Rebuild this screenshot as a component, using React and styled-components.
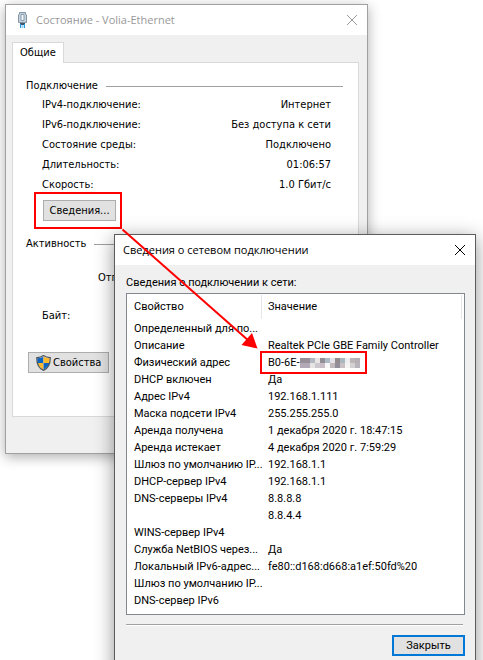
import React from "react";
import styled, { createGlobalStyle } from "styled-components";

const Global = createGlobalStyle`
  * { box-sizing: border-box; }
  body { margin: 0; background: #fff; color: #000; }
`;

const dialogFont = '"DejaVu Sans Condensed", "DejaVu Sans", Tahoma, sans-serif';
const listFont = 'Roboto, "Liberation Sans", sans-serif';

const Desktop = styled.main`
  position: relative;
  min-height: 100vh;
  overflow: hidden;
  font: 11px/16px ${dialogFont};
`;

const Window = styled.section`
  position: absolute;
  top: ${(p) => p.$top}px;
  left: ${(p) => p.$left}px;
  right: ${(p) => p.$right}px;
  background: #f0f0f0;
  border: 1px solid ${(p) => (p.$active ? "#5c5c5c" : "#a0a0a0")};
  box-shadow: ${(p) =>
    p.$active ? "0 4px 18px rgba(0, 0, 0, 0.42)" : "0 3px 12px rgba(0, 0, 0, 0.32)"};
`;

const TitleBar = styled.header`
  display: flex;
  align-items: center;
  gap: 9px;
  height: 30px;
  padding: 0 9px 0 ${(p) => (p.$active ? 8 : 12)}px;
  background: #fff;
  color: ${(p) => (p.$active ? "#000" : "#999")};
`;

const Title = styled.h1`
  flex: 1;
  margin: 0;
  font: 400 11px/16px "Open Sans", "Noto Sans", sans-serif;
  white-space: nowrap;
`;

const CloseButton = styled.button`
  display: flex;
  padding: 0;
  border: 0;
  background: none;
  color: inherit;
`;

const TabStrip = styled.div`
  display: flex;
  padding: 7px 6px 0;
`;

const Tab = styled.button`
  position: relative;
  z-index: 1;
  height: 21px;
  margin-bottom: -1px;
  padding: 0 7px;
  border: 1px solid #d9d9d9;
  border-bottom: 0;
  background: #fff;
  color: #000;
  font: 11px/16px ${dialogFont};
`;

const TabPanel = styled.div`
  margin: 0 8px 36px 6px;
  padding: 15px 15px 43px 13px;
  border: 1px solid #d9d9d9;
  background: #fff;
`;

const GroupTitle = styled.h2`
  display: flex;
  align-items: center;
  gap: 8px;
  margin: 0;
  font: 400 11px/16px ${dialogFont};
  &::after {
    content: "";
    flex: 1;
    height: 1px;
    background: #a0a0a0;
  }
`;

const StatusList = styled.dl`
  margin: 1px 12px 0 16px;
`;

const StatusRow = styled.div`
  display: flex;
  justify-content: space-between;
  line-height: 20px;
  dd { margin: 0; }
`;

const PushButton = styled.button`
  display: inline-flex;
  align-items: center;
  justify-content: center;
  gap: 2px;
  min-width: 73px;
  height: 21px;
  padding: 0 ${(p) => (p.$shield ? 7 : 4)}px;
  border: ${(p) => (p.$primary ? "2px solid #0078d7" : "1px solid #adadad")};
  background: #e1e1e1;
  color: #000;
  font: 11px/16px ${(p) => (p.$primary ? listFont : dialogFont)};
`;

const Highlight = styled.div`
  width: fit-content;
  margin: -3px 0 7px 8px;
  padding: 6px 4px 6px 7px;
  border: 2px solid #f00;
  display: flex;
`;

const Activity = styled.div`
  display: grid;
  gap: 22px;
  padding: 18px 12px 28px 16px;
`;

const SentLabel = styled.span`
  padding-left: 56px;
`;

const Footer = styled.div`
  padding-left: 2px;
  display: flex;
`;

const DetailsBody = styled.div`
  padding: 10px 10px 24px 11px;
  font-family: ${listFont};
`;

const Caption = styled.p`
  margin: 0 0 2px;
`;

const ListFrame = styled.div`
  padding: 0 2px 5px 0;
  border: 1px solid #828790;
  background: #fff;
`;

const DetailsTable = styled.table`
  width: 100%;
  border-collapse: separate;
  border-spacing: 0;
  table-layout: fixed;
  white-space: nowrap;
  th, td {
    padding: 0 0 0 6px;
    font-weight: 400;
    text-align: left;
  }
  th:first-child, td:first-child { padding-left: 7px; }
  thead th {
    height: 26px;
    background: linear-gradient(#e5e5e5, #e5e5e5) right 0 top 1px / 1px 24px no-repeat;
  }
  td {
    height: 17px;
    line-height: 17px;
  }
`;

const NameColumn = styled.col`
  width: 135px;
`;

const Address = styled.span`
  position: relative;
  display: inline-flex;
  align-items: center;
  &::after {
    content: "";
    position: absolute;
    inset: -3px -7px -3px -8px;
    border: 2px solid #f00;
  }
`;

const Divider = styled.hr`
  height: 2px;
  margin: 9px 2px 9px 0;
  border: 0;
  border-top: 1px solid #a0a0a0;
  background: #fff;
`;

const Actions = styled.div`
  display: flex;
  justify-content: flex-end;
`;

const Arrow = styled.svg`
  position: absolute;
  top: 226px;
  left: 118px;
  pointer-events: none;
`;

const CloseIcon = () => (
  <svg width="12" height="12" viewBox="0 0 12 12" aria-hidden="true">
    <path d="M1 1L11 11M11 1L1 11" stroke="currentColor" fill="none" />
  </svg>
);

const AdapterIcon = () => (
  <svg width="9" height="17" viewBox="0 0 9 17" aria-hidden="true">
    <path d="M1.500 .5H7.500V2L8.500 3V10.500H.5V3L1.500 2Z" fill="#c4d2dd" stroke="#8495a6" />
    <path d="M3 2.500H6V8.500H3Z" fill="#f1f5f8" stroke="#8d9eae" />
    <path d="M2 11H7V13H2Z" fill="#43586b" />
    <path d="M2.500 12V16M6.500 12V16" stroke="#2a9be0" />
    <path d="M4.500 13V16" stroke="#8fd0f5" strokeWidth="2" />
  </svg>
);

const ShieldIcon = () => (
  <svg width="15" height="16" viewBox="0 0 15 16" aria-hidden="true">
    <path d="M7.5 .6C5.6 2 3.2 2.7 .8 2.6C.6 8.5 2.2 13 7.5 15.4C12.8 13 14.4 8.5 14.2 2.6C11.8 2.7 9.4 2 7.5 .6Z" fill="#fff" />
    <path d="M7.5 1.3C5.8 2.700 3.800 3.200 1.300 3.200V8H7.5Z" fill="#0b66c3" />
    <path d="M7.5 1.3C9.2 2.700 11.2 3.200 13.700 3.200V8H7.5Z" fill="#fdb92e" />
    <path d="M7.5 14.800C4 13 2 10.5 1.400 8H7.5Z" fill="#fdb92e" />
    <path d="M7.5 14.800C11 13 13 10.5 13.600 8H7.5Z" fill="#0b66c3" />
    <path d="M7.5 .6C5.6 2 3.2 2.7 .8 2.6C.6 8.5 2.2 13 7.5 15.4C12.8 13 14.4 8.5 14.2 2.6C11.8 2.7 9.4 2 7.5 .6Z" fill="none" stroke="#4d5359" strokeWidth="1.2" />
  </svg>
);

const mosaic = [
  ["#989097", "#988f98", "#b2b9c1", "#e9e6e5", "#918f94", "#adbcc4", "#e5e3e7", "#948b8d", "#a9b8bf", "#eeeeef", "#bcb6b9", "#b5b0b3"],
  ["#b3a8b5", "#b3a8b5", "#e7e5e4", "#cbc9cf", "#c9bec5", "#f8f8f8", "#c2b9bb", "#948d9a", "#c8c0c3", "#f4f4f4", "#d4d1d3", "#b9b4bb"],
];

const Mosaic = () => (
  <svg width="60" height="10" shapeRendering="crispEdges" aria-hidden="true">
    {mosaic.map((line, y) =>
      line.map((fill, x) => (
        <rect key={`${x}-${y}`} x={x * 5} y={y * 5} width="5" height="5" fill={fill} />
      ))
    )}
  </svg>
);

const status = [
  ["IPv4-подключение:", "Интернет"],
  ["IPv6-подключение:", "Без доступа к сети"],
  ["Состояние среды:", "Подключено"],
  ["Длительность:", "01:06:57"],
  ["Скорость:", "1.0 Гбит/с"],
];

const details = [
  ["Определенный для по...", ""],
  ["Описание", "Realtek PCIe GBE Family Controller"],
  ["Физический адрес", <Address key="mac">B0-6E-<Mosaic /></Address>],
  ["DHCP включен", "Да"],
  ["Адрес IPv4", "192.168.1.111"],
  ["Маска подсети IPv4", "255.255.255.0"],
  ["Аренда получена", "1 декабря 2020 г. 18:47:15"],
  ["Аренда истекает", "4 декабря 2020 г. 7:59:29"],
  ["Шлюз по умолчанию IP...", "192.168.1.1"],
  ["DHCP-сервер IPv4", "192.168.1.1"],
  ["DNS-серверы IPv4", "8.8.8.8"],
  ["", "8.8.4.4"],
  ["WINS-сервер IPv4", ""],
  ["Служба NetBIOS через...", "Да"],
  ["Локальный IPv6-адрес...", "fe80::d168:d668:a1ef:50fd%20"],
  ["Шлюз по умолчанию IP...", ""],
  ["DNS-сервер IPv6", ""],
];

function StatusWindow() {
  return (
    <Window $top={4} $left={5} $right={115}>
      <TitleBar>
        <AdapterIcon />
        <Title>Состояние - Volia-Ethernet</Title>
        <CloseButton aria-label="Закрыть окно"><CloseIcon /></CloseButton>
      </TitleBar>
      <TabStrip role="tablist">
        <Tab role="tab" aria-selected="true">Общие</Tab>
      </TabStrip>
      <TabPanel role="tabpanel">
        <GroupTitle>Подключение</GroupTitle>
        <StatusList>
          {status.map(([name, value]) => (
            <StatusRow key={name}><dt>{name}</dt><dd>{value}</dd></StatusRow>
          ))}
        </StatusList>
        <Highlight><PushButton>Сведения...</PushButton></Highlight>
        <GroupTitle>Активность</GroupTitle>
        <Activity>
          <SentLabel>Отп</SentLabel>
          <span>Байт:</span>
        </Activity>
        <Footer><PushButton $shield><ShieldIcon />Свойства</PushButton></Footer>
      </TabPanel>
    </Window>
  );
}

function DetailsWindow() {
  return (
    <Window $top={234} $left={114} $right={7} $active>
      <TitleBar $active>
        <Title>Сведения о сетевом подключении</Title>
        <CloseButton aria-label="Закрыть окно"><CloseIcon /></CloseButton>
      </TitleBar>
      <DetailsBody>
        <Caption id="details-caption">Сведения о подключении к сети:</Caption>
        <ListFrame>
          <DetailsTable aria-labelledby="details-caption">
            <colgroup><NameColumn /><col /></colgroup>
            <thead>
              <tr><th scope="col">Свойство</th><th scope="col">Значение</th></tr>
            </thead>
            <tbody>
              {details.map(([name, value], i) => (
                <tr key={i}><td>{name}</td><td>{value}</td></tr>
              ))}
            </tbody>
          </DetailsTable>
        </ListFrame>
        <Divider />
        <Actions><PushButton $primary>Закрыть</PushButton></Actions>
      </DetailsBody>
    </Window>
  );
}

export default function App() {
  return (
    <>
      <Global />
      <Desktop>
        <StatusWindow />
        <DetailsWindow />
        <Arrow width="142" height="124" viewBox="118 226 142 124" aria-hidden="true">
          <path d="M122.5 229.5L249 341" stroke="#f00" strokeWidth="2" fill="none" />
          <path d="M257.500 348.500L241.500 345L252 333Z" fill="#f00" />
        </Arrow>
      </Desktop>
    </>
  );
}
